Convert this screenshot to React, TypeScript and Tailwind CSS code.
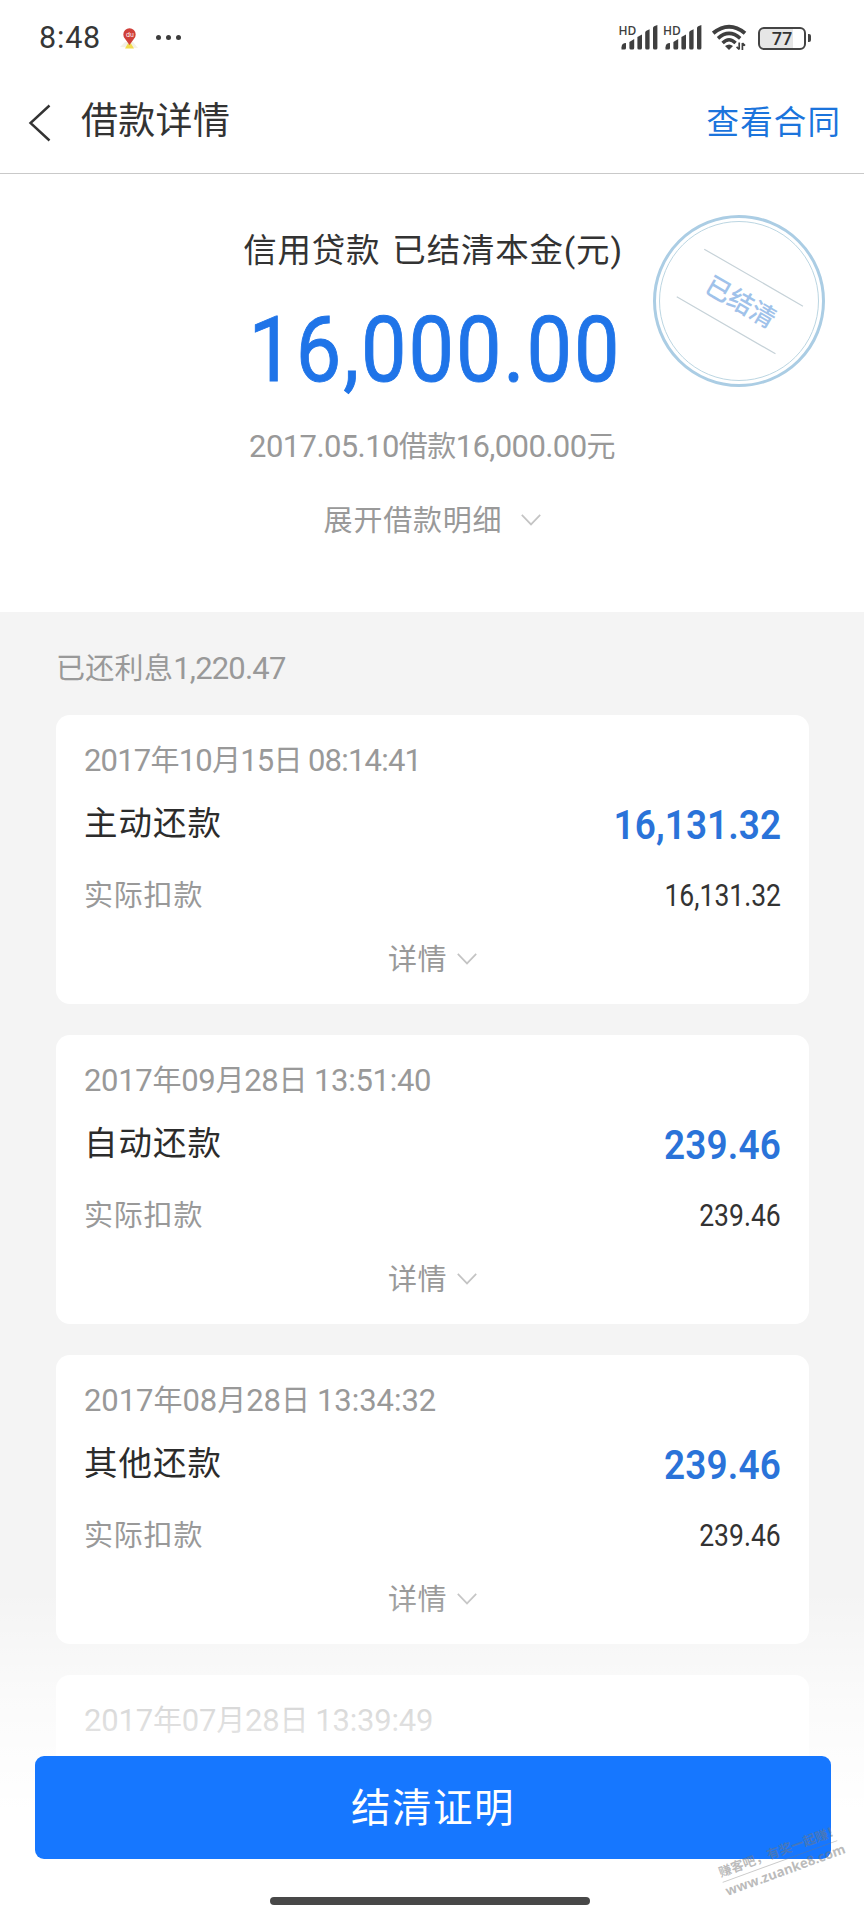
const payments = [
  {
    date: "2017年10月15日 08:14:41",
    dateTracking: "tracking-[-0.8px]",
    title: "主动还款",
    amount: "16,131.32",
    amountTracking: "tracking-[0.1px]",
  },
  {
    date: "2017年09月28日 13:51:40",
    dateTracking: "tracking-[-0.3px]",
    title: "自动还款",
    amount: "239.46",
    amountTracking: "tracking-[0.2px]",
  },
  {
    date: "2017年08月28日 13:34:32",
    dateTracking: "tracking-[-0.05px]",
    title: "其他还款",
    amount: "239.46",
    amountTracking: "tracking-[0.2px]",
  },
  {
    date: "2017年07月28日 13:39:49",
    dateTracking: "tracking-[-0.2px]",
  },
];

function Chevron() {
  return (
    <svg className="mb-[2px]" width="20" height="12" viewBox="0 0 20 12" fill="none">
      <path d="M0.8 0.8L10 10.4L19.2 0.8" stroke="#c4c4c4" strokeWidth="1.7" />
    </svg>
  );
}

function Signal() {
  return (
    <div className="relative">
      <span className="absolute top-[-1px] left-[-1px] font-['Open_Sans'] text-[12px] leading-[13px] font-semibold text-[#3f3f3f]">
        HD
      </span>
      <svg width="38" height="26" viewBox="0 0 38 26" fill="#3f3f3f">
        <path d="M1.5 24.5v-2.2a4.5 4.5 0 0 1 4.5-4.3v5a1.5 1.5 0 0 1-1.5 1.5z" />
        <path d="M9.4 17l4.8-3v9a1.5 1.5 0 0 1-1.5 1.5h-1.8a1.5 1.5 0 0 1-1.5-1.5z" />
        <path d="M17.4 12l4.6-2.6V23a1.5 1.5 0 0 1-1.5 1.5h-1.6a1.5 1.5 0 0 1-1.5-1.5z" />
        <path d="M25.2 7.5a2 2 0 0 1 1.2-1.8l3.2-1.5V23a1.5 1.5 0 0 1-1.5 1.5h-1.4a1.5 1.5 0 0 1-1.5-1.5z" />
        <path d="M33 3a2 2 0 0 1 1.2-1.8L37.4 0V23a1.5 1.5 0 0 1-1.5 1.5h-1.4A1.5 1.5 0 0 1 33 23z" />
      </svg>
    </div>
  );
}

function Wifi() {
  return (
    <svg width="35" height="28" viewBox="0 0 35 28" fill="none" stroke="#3f3f3f">
      <path d="M1.2 9.2Q17 -3.8 33 9.2" strokeWidth="4" />
      <path d="M6 14.3Q17 4.6 28.2 14.3" strokeWidth="3.6" />
      <path d="M10.6 19Q17 12.4 23.6 19" strokeWidth="3.4" />
      <path d="M13 21.9q4.2-3 8 0L17 26z" fill="#3f3f3f" stroke="none" />
      <path d="M27.2 18.5v7M27.2 25.5l-2.6-2.7M30.4 26v-7M30.4 19l2.6 2.7" strokeWidth="1.7" />
    </svg>
  );
}

function StatusBar() {
  return (
    <div className="flex h-[74px] items-center pr-[53px] pl-[39px]">
      <span className="w-[80px] pt-[2px] text-[30.5px] leading-none tracking-[0.8px] text-[#363636]">8:48</span>
      <svg className="mt-[4px]" width="20" height="22" viewBox="0 0 20 22">
        <path d="M1 19l5-5h8l5 6z" fill="#f3f1e6" />
        <path d="M6 20.5l3-5h3l3 5z" fill="#f2dc4e" />
        <path d="M10.5 17L6 10.8a6.2 6.2 0 1 1 9 0z" fill="#d0403a" />
        <text x="7" y="9.3" fontSize="6.5" fill="#fff" fontFamily="Inter, sans-serif">
          du
        </text>
      </svg>
      <div className="ml-[17px] flex gap-[5px]">
        <span className="size-[5px] rounded-full bg-[#3c3c3c]" />
        <span className="size-[5px] rounded-full bg-[#3c3c3c]" />
        <span className="size-[5px] rounded-full bg-[#3c3c3c]" />
      </div>
      <div className="ml-auto flex items-center pt-[2px]">
        <Signal />
        <div className="w-[6.5px]" />
        <Signal />
        <div className="w-[10px]" />
        <Wifi />
        <div className="ml-[11px] flex h-[23px] w-[48px] items-center justify-center rounded-[6px] border-2 border-[#444] bg-[linear-gradient(to_right,#e6e6e6_76%,#fff_76%)] font-['Open_Sans'] text-[18px] leading-none font-semibold text-[#333]">
          77
        </div>
        <div className="ml-[2px] h-[8px] w-[3px] rounded-r-[2px] bg-[#444]" />
      </div>
    </div>
  );
}

function Stamp() {
  return (
    <svg
      className="absolute top-[38.5px] left-[650.5px]"
      width="176"
      height="176"
      viewBox="-88 -88 176 176"
      fill="none"
    >
      <circle r="84.5" stroke="#abcde4" strokeWidth="3" />
      <circle r="79.5" stroke="#bcd6e2" strokeWidth="1" />
      <g transform="rotate(30)">
        <path d="M-56 -27.500H58M-56 27.500H58" stroke="#c6d2d8" strokeWidth="1.2" />
        <text
          x="2"
          y="9"
          textAnchor="middle"
          fontSize="25.5"
          fontWeight="500"
          fill="#a0c2ea"
          fontFamily="'Noto Sans CJK SC', sans-serif"
        >
          已结清
        </text>
      </g>
    </svg>
  );
}

// Latin digits are set slightly larger than the Chinese characters around them
function Mixed({ text, className }: { text: string; className: string }) {
  return (
    <>
      {text.split(/([\d.,:]+)/).map((part, index) => (
        <span key={index} className={/\d/.test(part) ? className : ""}>
          {part}
        </span>
      ))}
    </>
  );
}

function PaymentCard({ item }: { item: (typeof payments)[number] }) {
  return (
    <div className="h-[289px] shrink-0 rounded-[14px] bg-white px-[28px] pt-[20px]">
      <div className={`flex h-[50px] items-center whitespace-pre text-[29px] text-[#999] ${item.dateTracking}`}>
        <div>
          <Mixed text={item.date} className="text-[31px]" />
        </div>
      </div>
      {item.title && (
        <>
          <div className="flex h-[74px] items-center justify-between text-[#2c2c2c]">
            <span className="pt-[4px] text-[33.5px] tracking-[1px]">{item.title}</span>
            <span
              className={`origin-right scale-x-90 pt-[6px] text-[41px] font-semibold text-[#2a73d9] ${item.amountTracking}`}
            >
              {item.amount}
            </span>
          </div>
          <div className="flex h-[70px] items-center justify-between">
            <span className="pt-[4px] text-[29px] tracking-[0.8px] text-[#999]">实际扣款</span>
            <span className="origin-right scale-x-[0.87] pt-[5px] text-[30.5px] text-[#333]">{item.amount}</span>
          </div>
          <div className="flex h-[58px] items-center justify-center gap-[10px] pt-[4px] text-[29px] tracking-[0.4px] text-[#999]">
            详情
            <Chevron />
          </div>
        </>
      )}
    </div>
  );
}

export default function App() {
  return (
    <div className="relative flex h-[1920px] w-[864px] flex-col overflow-hidden bg-white font-[Roboto,'Noto_Sans_CJK_SC',sans-serif] leading-none">
      <StatusBar />

      <header className="flex h-[100px] shrink-0 items-center border-b border-[#c9c9c9] pr-[23px] pb-[2px] pl-[28px]">
        <svg width="23" height="38" viewBox="0 0 23 38" fill="none">
          <path d="M21.5 1.5L2.5 19L21.5 36.5" stroke="#333" strokeWidth="2.4" />
        </svg>
        <h1 className="ml-[30px] pb-[2px] text-[37px] tracking-[0.3px] text-[#333]">借款详情</h1>
        <a className="ml-auto pt-[1px] text-[32.5px] tracking-[1.1px] text-[#1b74dc]">查看合同</a>
      </header>

      <section className="relative flex h-[438px] shrink-0 flex-col items-center pt-[46px]">
        <div className="flex h-[60px] items-center pt-[1px] pl-[2px] text-[33.5px] tracking-[0.8px] text-[#333]">
          <span>信用贷款</span>
          <span className="ml-[12px]">已结清本金(元)</span>
        </div>
        <div className="flex h-[140px] scale-x-90 items-center pt-[2px] pl-[6px] text-[90px] tracking-[2.1px] text-[#1f74e8] [-webkit-text-stroke:0.9px_#1f74e8]">
          16,000.00
        </div>
        <div className="flex h-[52px] items-center text-[29px] tracking-[-0.6px] text-[#999]">
          <div>
            <Mixed text="2017.05.10借款16,000.00元" className="text-[31px]" />
          </div>
        </div>
        <div className="mt-[20px] flex h-[56px] items-center gap-[19px] pt-[2px] pl-[1px] text-[29px] tracking-[0.8px] text-[#999]">
          展开借款明细
          <Chevron />
        </div>
        <Stamp />
      </section>

      <section className="flex flex-1 flex-col gap-[31px] overflow-hidden bg-[#f4f4f4] pr-[55px] pl-[56px]">
        <div className="mb-[-31px] flex h-[103px] shrink-0 items-center pt-[10px] text-[29px] tracking-[0.3px] text-[#999]">
          <div>
            <Mixed text="已还利息1,220.47" className="text-[31px] tracking-[-0.8px]" />
          </div>
        </div>
        {payments.map((item) => (
          <PaymentCard key={item.date} item={item} />
        ))}
      </section>

      {/* bottom action fades the list out behind it */}
      <footer className="absolute inset-x-0 bottom-0 flex h-[330px] flex-col items-center bg-[linear-gradient(to_bottom,rgba(255,255,255,0),rgba(255,255,255,0.6)_110px,#fff_220px)] pt-[166px]">
        <button className="ml-[2px] h-[103px] w-[796px] rounded-[9px] bg-[#1677ff] pt-[2px] text-[39.5px] tracking-[1.5px] text-white">
          结清证明
        </button>
        <div className="mt-[38px] mr-[5px] h-[8px] w-[320px] rounded-full bg-[#484848]" />
      </footer>

      <div className="absolute top-[1845px] left-[719px] w-[122px] rotate-[-20deg] font-['Open_Sans','Noto_Sans_CJK_SC',sans-serif] font-bold text-[#777]/50">
        <div className="border-b border-[#777]/40 pb-[3px] text-[12.8px] whitespace-nowrap">赚客吧，有奖一起赚！</div>
        <div className="pt-[3px] text-[13.4px]">www.zuanke8.com</div>
      </div>
    </div>
  );
}
